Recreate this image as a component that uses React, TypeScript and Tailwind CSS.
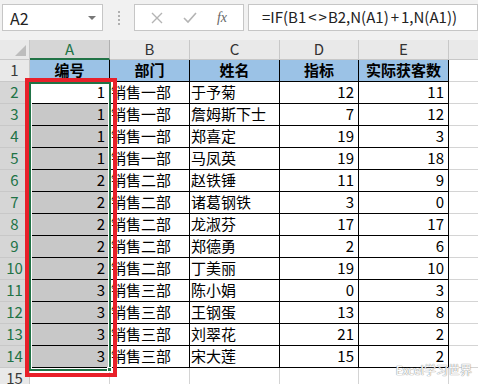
import React from "react";

const font = "font-['Microsoft_YaHei','Noto_Sans_CJK_SC',sans-serif]";

const cols = ["A", "B", "C", "D", "E"];
const colW = ["w-[80px]", "w-[80px]", "w-[90px]", "w-[79px]", "w-[90px]"];

const rows: [number, string, string, number, number][] = [
  [1, "销售一部", "于予菊", 12, 11],
  [1, "销售一部", "詹姆斯下士", 7, 12],
  [1, "销售一部", "郑喜定", 19, 3],
  [1, "销售一部", "马凤英", 19, 18],
  [2, "销售二部", "赵铁锤", 11, 9],
  [2, "销售二部", "诸葛钢铁", 3, 0],
  [2, "销售二部", "龙淑芬", 17, 17],
  [2, "销售二部", "郑德勇", 2, 6],
  [2, "销售二部", "丁美丽", 19, 10],
  [3, "销售三部", "陈小娟", 0, 3],
  [3, "销售三部", "王钢蛋", 13, 8],
  [3, "销售三部", "刘翠花", 21, 2],
  [3, "销售三部", "宋大莲", 15, 2],
];

function RowHead({ n, sel }: { n: number; sel?: boolean }) {
  return (
    <div
      className={`w-[30px] shrink-0 flex items-center justify-center border-r border-b border-[#c8c8c8] text-[15px] ${
        sel ? "bg-[#d6d6d6] text-[#217346]" : "bg-[#e9e9e9] text-[#3a3a3a]"
      }`}
    >
      {n}
    </div>
  );
}

export default function App() {
  return (
    <div className={`relative w-[478px] h-[384px] overflow-hidden bg-white ${font}`}>
      {/* formula bar */}
      <div className="h-[38px] bg-[#f1f1f1] flex items-start pt-[4px]">
        <div className="ml-[2px] w-[101px] h-[27px] bg-white border border-[#c6c6c6] flex items-center justify-between pl-[7px] pr-[6px]">
          <span className="text-[16px] text-[#222]">A2</span>
          <span className="w-0 h-0 border-l-[4px] border-r-[4px] border-t-[4px] border-l-transparent border-r-transparent border-t-[#777]" />
        </div>
        <div className="w-[31px] h-[27px] flex flex-col items-center justify-center gap-[2px]">
          <span className="w-[2px] h-[2px] bg-[#b0b0b0]" />
          <span className="w-[2px] h-[2px] bg-[#b0b0b0]" />
          <span className="w-[2px] h-[2px] bg-[#b0b0b0]" />
          <span className="w-[2px] h-[2px] bg-[#b0b0b0]" />
        </div>
        <div className="w-[110px] h-[27px] bg-white border border-[#c6c6c6] flex items-center justify-around px-[6px]">
          <svg width="12" height="12" viewBox="0 0 12 12">
            <path d="M1 1L11 11M11 1L1 11" stroke="#b4b4b4" strokeWidth="1.4" />
          </svg>
          <svg width="14" height="12" viewBox="0 0 14 12">
            <path d="M1 6L5 10L13 1" stroke="#b4b4b4" strokeWidth="1.6" fill="none" />
          </svg>
          <span className="font-['Liberation_Serif',serif] italic text-[14px] text-[#666]">fx</span>
        </div>
        <div className="ml-[4px] flex-1 h-[27px] bg-white border border-[#c6c6c6] flex items-center pl-[13px] text-[15px] text-[#222] whitespace-nowrap">
          =IF(B1<span className="px-[2px]">&lt;</span>
          <span className="pr-[1px]">&gt;</span>B2,N(A1)<span className="px-[2px]">+</span>1,N(A1))
        </div>
      </div>

      {/* column headers */}
      <div className="flex h-[22px] pt-[2px] bg-[#f1f1f1]">
        <div className="w-[30px] shrink-0 bg-[#e9e9e9] border-r border-b border-[#c8c8c8] relative">
          <span className="absolute right-[3px] bottom-[3px] w-0 h-0 border-l-[11px] border-t-[11px] border-l-transparent border-t-transparent border-b-0 border-r-0 [border-right:0] [border-bottom:11px_solid_#bdbdbd]" />
        </div>
        {cols.map((c, i) => (
          <div
            key={c}
            className={`${colW[i]} shrink-0 flex items-center justify-center text-[15px] border-r ${
              i === 0
                ? "bg-[#d6d6d6] text-[#217346] border-b-2 border-b-[#217346] border-r-[#b0b0b0]"
                : "bg-[#e9e9e9] text-[#333] border-b border-[#c8c8c8]"
            }`}
          >
            {c}
          </div>
        ))}
        <div className="flex-1 bg-[#e9e9e9] border-b border-[#c8c8c8]" />
      </div>

      {/* row 1 */}
      <div className="flex h-[22px]">
        <RowHead n={1} />
        {["编号", "部门", "姓名", "指标", "实际获客数"].map((h, i) => (
          <div
            key={h}
            className={`${colW[i]} shrink-0 bg-[#9bc2e6] border-r border-b border-black flex items-center justify-center font-bold text-[15px] text-black`}
          >
            {h}
          </div>
        ))}
        <div className="flex-1 border-b border-[#d4d4d4]" />
      </div>

      {rows.map((r, idx) => (
        <div key={idx} className="flex h-[22px]">
          <RowHead n={idx + 2} sel />
          <div
            className={`w-[80px] shrink-0 border-r border-b border-black flex items-center justify-end pr-[4px] text-[15px] text-black ${
              idx === 0 ? "bg-white" : "bg-[#c8c8c8]"
            }`}
          >
            {r[0]}
          </div>
          <div className="w-[80px] shrink-0 border-r border-b border-black flex items-center pl-[1px] text-[15px] text-black whitespace-nowrap">
            {r[1]}
          </div>
          <div className="w-[90px] shrink-0 border-r border-b border-black flex items-center pl-[1px] text-[15px] text-black whitespace-nowrap">
            {r[2]}
          </div>
          <div className="w-[79px] shrink-0 border-r border-b border-black flex items-center justify-end pr-[4px] text-[15px] text-black">
            {r[3]}
          </div>
          <div className="w-[90px] shrink-0 border-r border-b border-black flex items-center justify-end pr-[4px] text-[15px] text-black">
            {r[4]}
          </div>
          <div className="flex-1 border-b border-[#d4d4d4]" />
        </div>
      ))}

      {/* row 15 */}
      <div className="flex h-[22px]">
        <RowHead n={15} />
        {colW.map((w, i) => (
          <div key={i} className={`${w} shrink-0 border-r border-[#d4d4d4]`} />
        ))}
      </div>

      {/* selection */}
      <div className="absolute left-[29px] top-[82px] w-[82px] h-[289px] border-2 border-[#217346]">
        <div className="w-full h-full border border-white" />
        <div className="absolute right-[-3px] bottom-[-3px] w-[5px] h-[5px] bg-[#217346] border border-white" />
      </div>

      {/* red annotation */}
      <div className="absolute left-[25px] top-[78px] w-[92px] h-[299px] border-[4px] border-[#e8202a]" />

      {/* watermark */}
      <div className="absolute right-[6px] bottom-[5px] text-[12px] text-white [text-shadow:0_0_1px_#888,0_0_1px_#888]">
        Excel学习世界
      </div>
    </div>
  );
}
